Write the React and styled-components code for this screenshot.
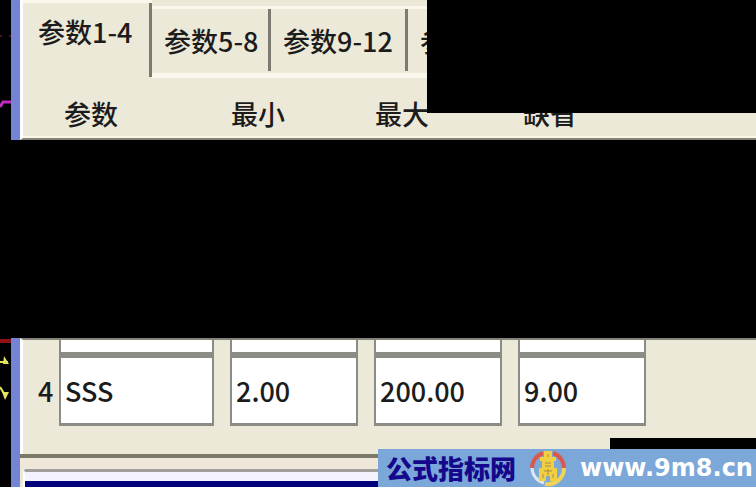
import { useState } from "react";
import styled, { createGlobalStyle } from "styled-components";

const GlobalStyle = createGlobalStyle`
  * {
    box-sizing: border-box;
  }
  body {
    margin: 0;
    background-color: #000000;
  }
`;

const Page = styled.div`
  position: relative;
  display: flex;
  flex-direction: column;
  min-height: 100vh;
  overflow: hidden;
  color: #1c1c1c;
  font-family: "Noto Sans CJK SC", sans-serif;
  font-size: 27px;
  font-weight: 500;
  line-height: 40px;
`;

const Section = styled.section`
  display: flex;
  flex: ${(props) => (props.$grow ? 1 : "none")};
`;

const ChartEdge = styled.svg`
  flex: none;
  width: 11px;
  height: 140px;
`;

const Panel = styled.div`
  display: flex;
  flex-direction: column;
  flex: 1;
  min-width: 0;
  overflow: hidden;
  border-left: 9px solid #7484d4;
  background-color: #ece9d8;
`;

const PanelBody = styled.div`
  border-left: 3px solid #ffffff;
  border-top: ${(props) => (props.$lower ? "2px solid #86847a" : "none")};
  border-bottom: ${(props) => (props.$lower ? "none" : "2px solid #86847a")};
`;

const Tabs = styled.div`
  display: flex;
  align-items: flex-end;
  height: 78px;
`;

const Tab = styled.button`
  flex: none;
  width: ${(props) => props.$width}px;
  height: ${(props) => (props.$active ? 78 : 72)}px;
  padding: ${(props) => (props.$active ? "0 0 18px 15px" : "0 0 0 12px")};
  border: 0;
  border-top: 3px solid #faf8ec;
  border-bottom: ${(props) => (props.$active ? "none" : "5px solid #faf8ec")};
  background: linear-gradient(#7c7a70, #7c7a70) right top / 3px
    ${(props) => (props.$active ? "74px" : "62px")} no-repeat #ece9d8;
  color: inherit;
  font: inherit;
  text-align: left;
  white-space: nowrap;
`;

const Grid = styled.div`
  display: grid;
  grid-template-columns: 20px 155px 128px 128px 128px;
  column-gap: 16px;
`;

const HeaderGrid = styled(Grid)`
  height: 60px;
  padding-top: 16px;
  border-bottom: 2px solid #fbf8e8;
`;

const Heading = styled.div`
  padding-left: ${(props) => (props.$wide ? 5 : 1)}px;
`;

const Band = styled.div`
  height: 198px;
  background-color: #000000;
`;

const RowLabel = styled.label`
  padding-left: 15px;
  align-self: center;
`;

const Field = styled.input`
  width: 100%;
  min-width: 0;
  height: ${(props) => (props.$cut ? 15 : 71)}px;
  padding: 0 4px;
  border: 2px solid #8c8c86;
  border-top-width: ${(props) => (props.$cut ? 0 : 3)}px;
  border-bottom-width: 3px;
  border-radius: 0;
  outline: none;
  background-color: #ffffff;
  color: inherit;
  font: inherit;
`;

const PanelFoot = styled.div`
  height: 28px;
`;

const Divider = styled.div`
  height: 15px;
  border-top: 4px solid #7b7a66;
  background-color: #efe7da;
`;

const InnerWindow = styled.div`
  flex: 1;
  margin-left: 3px;
  border-top: 3px solid #a09e98;
  border-left: 2px solid #ffffff;
  border-top-left-radius: 4px;
  background: linear-gradient(#f4f2ff 9px, #00007c 9px);
`;

const TopCover = styled.div`
  position: absolute;
  top: 0;
  right: 0;
  left: 427px;
  height: 113px;
  background-color: #000000;
`;

const Watermark = styled.footer`
  position: absolute;
  right: 0;
  bottom: 0;
  width: 50%;
  min-width: 378px;
`;

const WatermarkCap = styled.div`
  width: 146px;
  height: 11px;
  margin-left: auto;
  background-color: #000000;
`;

const WatermarkBar = styled.a`
  display: flex;
  align-items: center;
  height: 38px;
  padding-left: 8px;
  background-color: #7ba7d9;
  color: #16088c;
  font-size: 26px;
  font-weight: 900;
  line-height: 32px;
  text-decoration: none;
  white-space: nowrap;
`;

const Logo = styled.svg`
  flex: none;
  width: 38px;
  height: 38px;
  margin: 0 13px;
`;

const Address = styled.span`
  color: #ffffff;
  font-family: "DejaVu Sans", sans-serif;
  font-size: 24px;
  font-weight: 700;
`;

const tabs = [
  { title: "参数1-4", width: 129 },
  { title: "参数5-8", width: 119 },
  { title: "参数9-12", width: 137 },
  { title: "参数13-16", width: 160 },
];

const columns = ["参数", "最小", "最大", "缺省"];

function App() {
  const [activeTab, setActiveTab] = useState(0);
  const [third, setThird] = useState(["", "", "", ""]);
  const [fourth, setFourth] = useState(["SSS", "2.00", "200.00", "9.00"]);

  const change = (values, setValues, index) => (e) => {
    setValues(values.map((v, i) => (i === index ? e.target.value : v)));
  };

  return (
    <Page>
      <GlobalStyle />
      <Section>
        <ChartEdge viewBox="0 0 11 140">
          <path d="M0 107L3 102H11" fill="none" stroke="#c02bc0" strokeWidth="3" />
          <path d="M0 36h2M9 36h2" stroke="#4a1020" strokeWidth="2" />
        </ChartEdge>
        <Panel>
          <PanelBody>
            <Tabs role="tablist">
              {tabs.map((tab, i) => (
                <Tab
                  key={tab.title}
                  type="button"
                  role="tab"
                  aria-selected={i === activeTab}
                  $active={i === activeTab}
                  $width={tab.width}
                  onClick={() => setActiveTab(i)}
                >
                  {tab.title}
                </Tab>
              ))}
            </Tabs>
            <HeaderGrid>
              <span />
              {columns.map((name, i) => (
                <Heading key={name} $wide={i === 0 || i === 3}>
                  {name}
                </Heading>
              ))}
            </HeaderGrid>
          </PanelBody>
        </Panel>
      </Section>

      <Band />

      <Section $grow>
        <ChartEdge viewBox="0 0 11 140">
          <path d="M0 3H11" stroke="#8c1218" strokeWidth="4" />
          <path d="M0 24H8" stroke="#e4e45c" strokeWidth="2" />
          <path d="M4 18L9 26H3Z" fill="#e4e45c" />
          <path d="M0 49L5 57" stroke="#e4e45c" strokeWidth="2" />
          <path d="M2 54H9L5 62Z" fill="#e4e45c" />
        </ChartEdge>
        <Panel>
          <PanelBody $lower>
            <Grid>
              <span />
              {third.map((value, i) => (
                <Field
                  key={columns[i]}
                  $cut
                  aria-label={columns[i]}
                  value={value}
                  onChange={change(third, setThird, i)}
                />
              ))}
            </Grid>
            <Grid>
              <RowLabel htmlFor="param-4-0">4</RowLabel>
              {fourth.map((value, i) => (
                <Field
                  key={columns[i]}
                  id={`param-4-${i}`}
                  aria-label={i === 0 ? undefined : columns[i]}
                  value={value}
                  onChange={change(fourth, setFourth, i)}
                />
              ))}
            </Grid>
            <PanelFoot />
          </PanelBody>
          <Divider />
          <InnerWindow />
        </Panel>
      </Section>

      <TopCover />
      <Watermark>
        <WatermarkCap />
        <WatermarkBar href="#">
          公式指标网
          <Logo viewBox="0 0 38 38" fill="none">
            <path d="M3 19A16 16 0 0 1 14 4" stroke="#d95850" strokeWidth="4" />
            <path d="M24 4A16 16 0 0 1 35 19" stroke="#d95850" strokeWidth="4" />
            <path d="M3 19A16 16 0 0 0 15 34" stroke="#dfe6f0" strokeWidth="3" />
            <path d="M35 19A16 16 0 0 1 16 35" stroke="#f0d458" strokeWidth="4" />
            <path
              d="M15 2H23V8H27V12H25V19H28V32H21V27H17V32H10V19H13V12H11V8H15Z"
              fill="#f0d040"
            />
            <path d="M19 5V8M16 14H22M16 17H22M15 22H23M19 20V26M14 25V29M24 25V29" stroke="#a88c4c" strokeWidth="1" />
          </Logo>
          <Address>www.9m8.cn</Address>
        </WatermarkBar>
      </Watermark>
    </Page>
  );
}

export default App;
